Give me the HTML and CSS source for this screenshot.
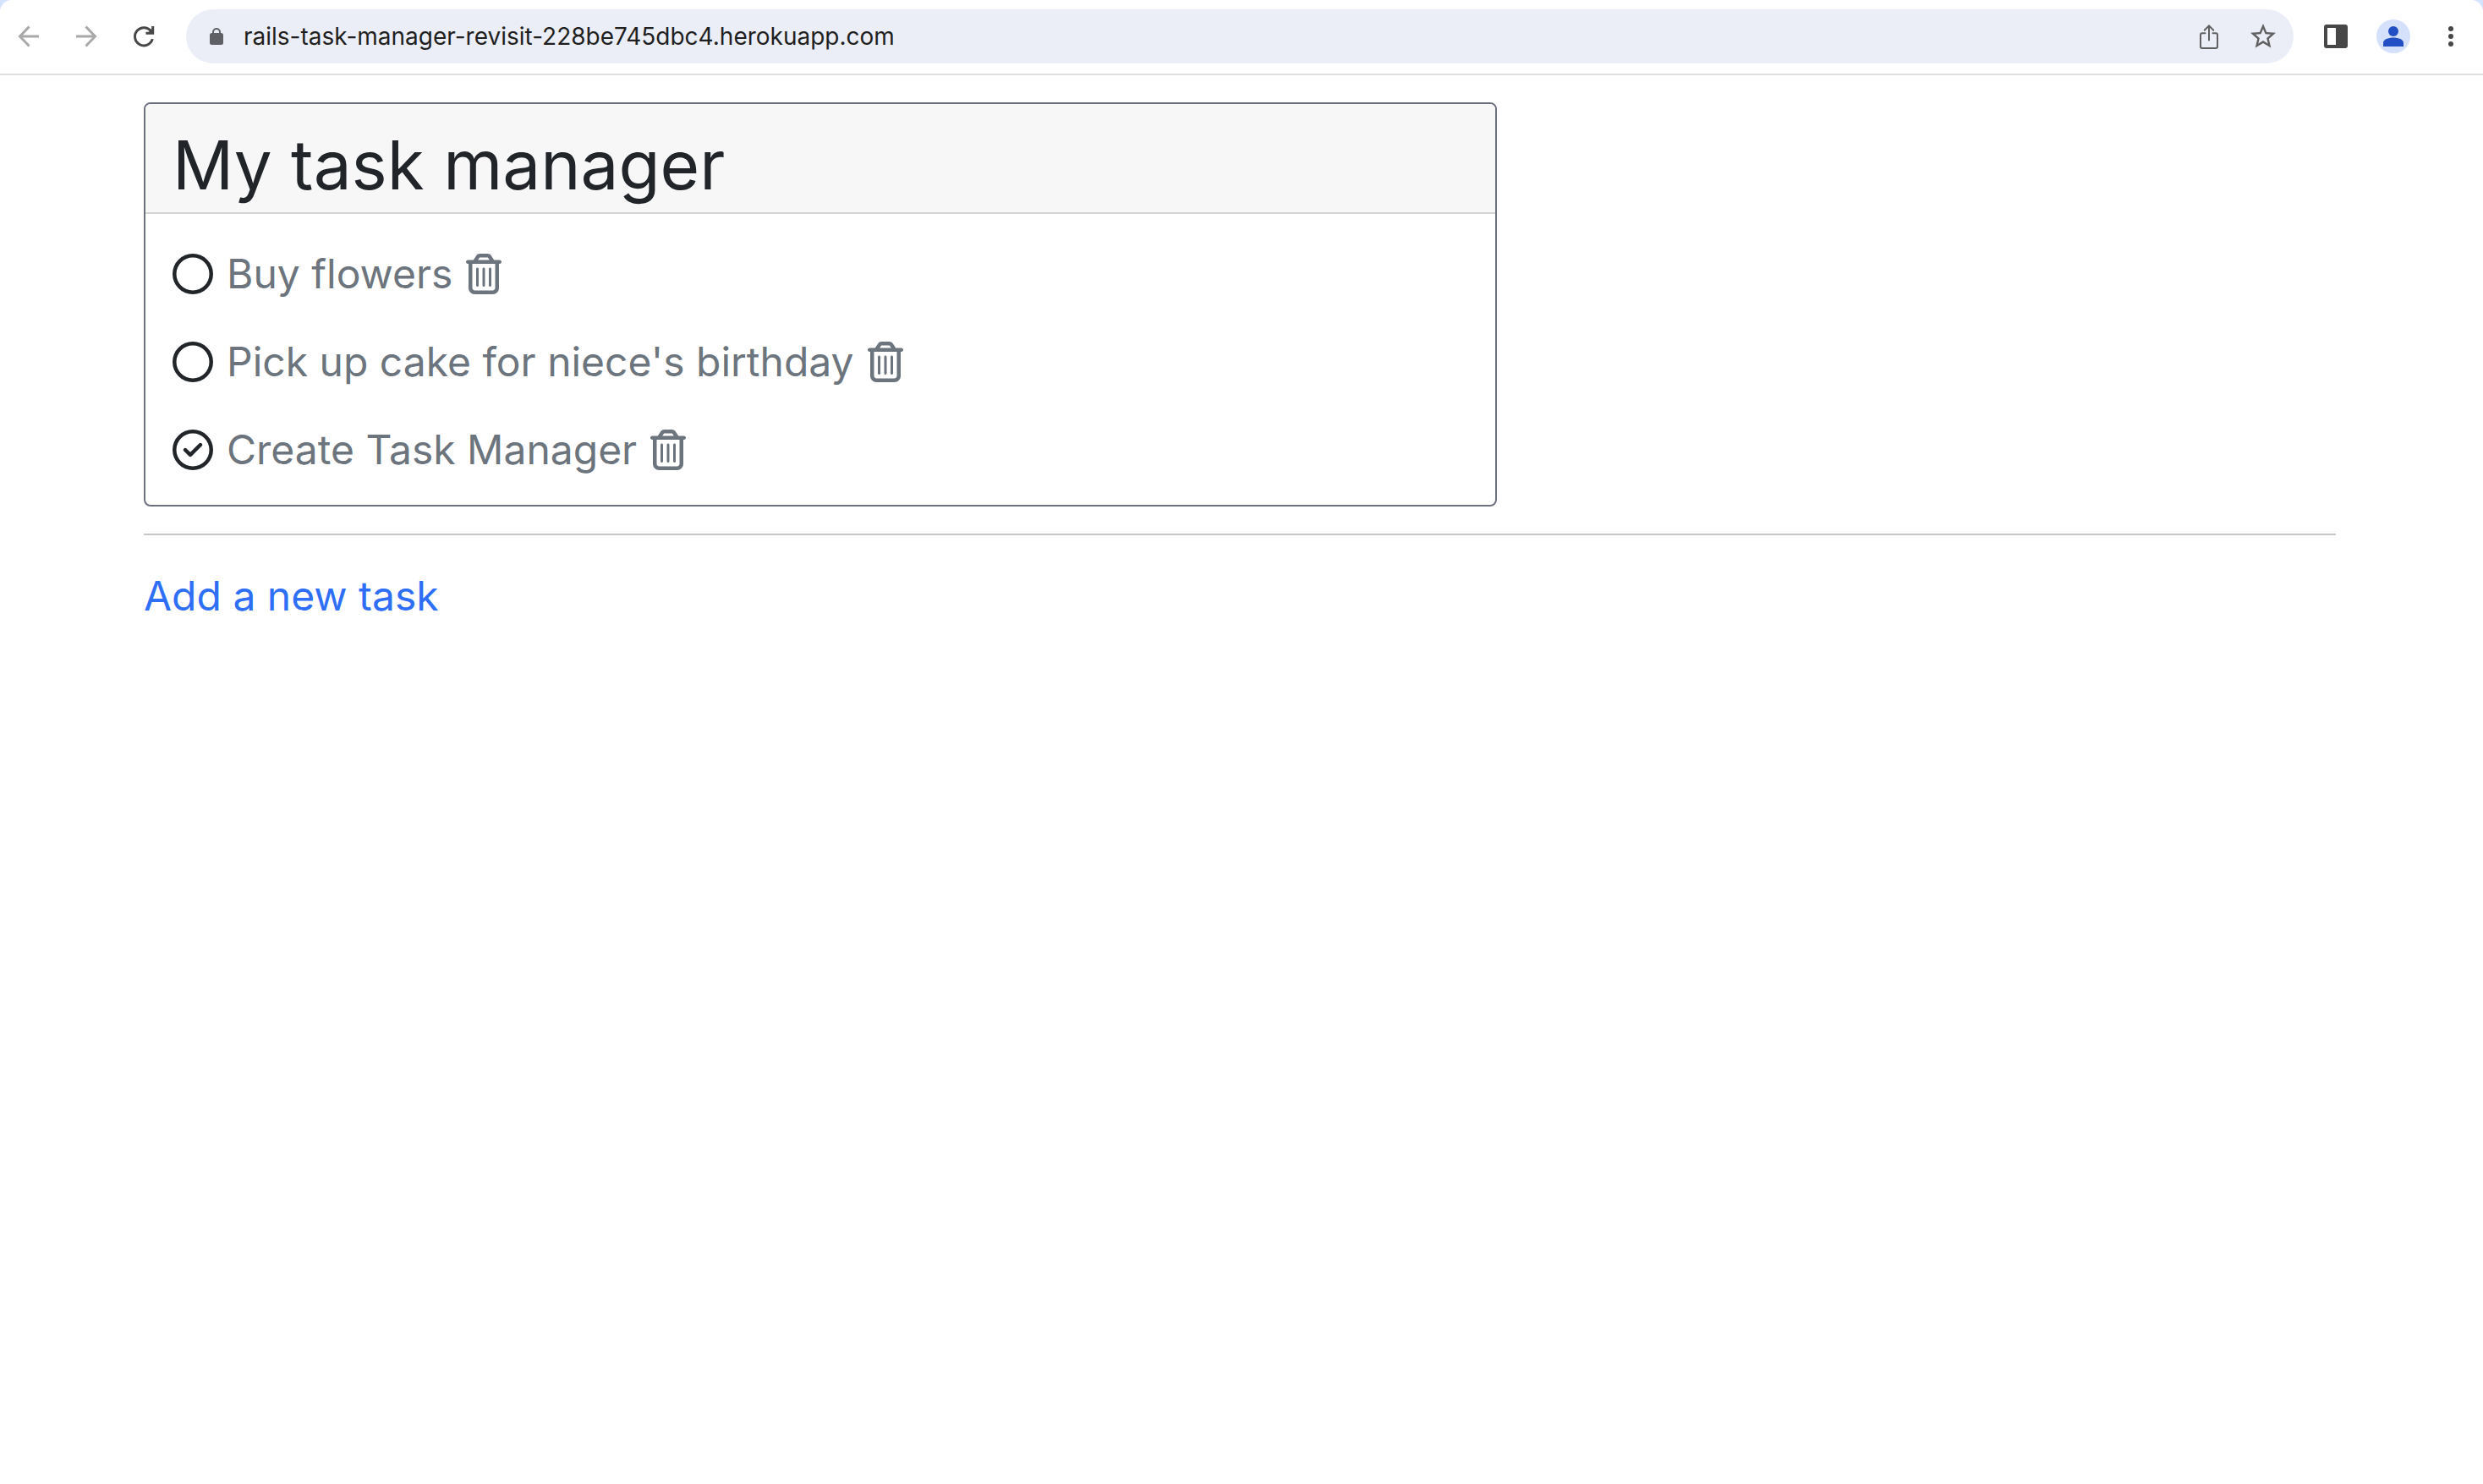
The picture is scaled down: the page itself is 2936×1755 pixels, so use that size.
FILE: index.html
```html
<!DOCTYPE html>
<html lang="en">
<head>
  <meta charset="utf-8">
  <title>My task manager</title>
  <link rel="stylesheet" href="styles.css">
</head>
<body>
  <svg class="sprite" aria-hidden="true">
    <symbol id="circle" viewBox="0 0 512 512"><path d="M464 256A208 208 0 1 0 48 256a208 208 0 1 0 416 0zM0 256a256 256 0 1 1 512 0A256 256 0 1 1 0 256z"/></symbol>
    <symbol id="circle-check" viewBox="0 0 512 512"><path d="M256 48a208 208 0 1 1 0 416 208 208 0 1 1 0-416zm0 464A256 256 0 1 0 256 0a256 256 0 1 0 0 512zM369 209c9.4-9.4 9.4-24.6 0-33.9s-24.6-9.4-33.9 0l-111 111-47-47c-9.4-9.4-24.6-9.4-33.9 0s-9.4 24.6 0 33.9l64 64c9.4 9.4 24.6 9.4 33.9 0L369 209z"/></symbol>
    <symbol id="trash" viewBox="0 0 448 512"><path d="M170.5 51.6L151.5 80h145l-19-28.4c-1.5-2.2-4-3.6-6.7-3.6H177.1c-2.7 0-5.2 1.3-6.7 3.6zm147-26.6L354.2 80H368h48 8c13.3 0 24 10.7 24 24s-10.7 24-24 24h-8V432c0 44.2-35.8 80-80 80H112c-44.2 0-80-35.8-80-80V128H24c-13.3 0-24-10.7-24-24S10.7 80 24 80h8H80 93.8l36.7-55.1C140.9 9.4 158.4 0 177.1 0h93.7c18.7 0 36.2 9.4 46.6 24.9zM80 128V432c0 17.7 14.3 32 32 32H336c17.7 0 32-14.3 32-32V128H80zm80 64V400c0 8.8-7.2 16-16 16s-16-7.2-16-16V192c0-8.8 7.2-16 16-16s16 7.2 16 16zm80 0V400c0 8.8-7.2 16-16 16s-16-7.2-16-16V192c0-8.8 7.2-16 16-16s16 7.2 16 16zm80 0V400c0 8.8-7.2 16-16 16s-16-7.2-16-16V192c0-8.8 7.2-16 16-16s16 7.2 16 16z"/></symbol>
  </svg>

  <div class="frame">
    <header class="toolbar">
      <nav class="tools" aria-label="Navigation">
        <button class="tool" type="button" aria-label="Back" disabled>
          <svg class="glyph faded" viewBox="0 0 48 48"><path d="M36 24H13.500M24.500 12.500 13.500 24l11 11.500"/></svg>
        </button>
        <button class="tool" type="button" aria-label="Forward" disabled>
          <svg class="glyph faded" viewBox="0 0 48 48"><path d="M12 24h22.500M23.500 12.500 34.500 24l-11 11.500"/></svg>
        </button>
        <button class="tool" type="button" aria-label="Reload">
          <svg class="glyph reload" viewBox="0 0 48 48"><path d="M34.300 27.200A10.600 10.600 0 1 1 33 18.500M34.700 12v8.300H26.500"/><path class="solid" d="M33.200 14.500v5.500h-5.200l3-2z"/></svg>
        </button>
      </nav>
      <div class="address">
        <svg class="lock" viewBox="0 0 16 22"><path d="M4 9V6a4 4 0 0 1 8 0v3" fill="none" stroke="#5f6066" stroke-width="2"/><rect y="7" width="16" height="14" rx="2.500" fill="#5f6066"/></svg>
        <input class="url" type="text" aria-label="Address" value="rails-task-manager-revisit-228be745dbc4.herokuapp.com">
        <button class="tool" type="button" aria-label="Share">
          <svg class="glyph share" viewBox="0 0 48 48"><path d="M19.500 20.200H16a2 2 0 0 0-2 2V36a2 2 0 0 0 2 2h16a2 2 0 0 0 2-2V22.200a2 2 0 0 0-2-2h-3.500M24 28.500V12M18.700 16.700 24 11.400l5.300 5.300"/></svg>
        </button>
        <button class="tool" type="button" aria-label="Bookmark this page">
          <svg class="star" viewBox="0 0 24 24"><path d="M22 9.240l-7.190-.620L12 2 9.190 8.630 2 9.240l5.460 4.730L5.820 21 12 17.270 18.180 21l-1.630-7.030L22 9.240zM12 15.400l-3.760 2.270 1-4.280-3.320-2.880 4.380-.380L12 6.100l1.710 4.040 4.380.380-3.320 2.880 1 4.280L12 15.400z"/></svg>
        </button>
      </div>
      <div class="tools">
        <button class="tool" type="button" aria-label="Side panel">
          <svg class="glyph" viewBox="0 0 48 48"><rect x="10" y="10" width="28" height="28" rx="3" fill="#474747"/><path d="M14 14h10v20H14z" fill="#fff"/></svg>
        </button>
        <button class="tool" type="button" aria-label="Profile">
          <svg class="glyph" viewBox="0 0 48 48"><circle cx="24" cy="24" r="20" fill="#d5e1fb"/><circle cx="24" cy="18" r="6" fill="#224fc4"/><path d="M12 36v-4.500C12 27 20 25.500 24 25.500S36 27 36 31.500V36z" fill="#224fc4"/></svg>
        </button>
        <button class="tool" type="button" aria-label="Menu">
          <svg class="glyph" viewBox="0 0 48 48" fill="#474747"><circle cx="24" cy="15" r="3"/><circle cx="24" cy="24" r="3"/><circle cx="24" cy="33" r="3"/></svg>
        </button>
      </div>
    </header>

    <main class="page">
      <section class="card">
        <h1 class="card-title">My task manager</h1>
        <ul class="tasks">
          <li class="task">
            <svg class="state" role="img" aria-label="To do"><use href="#circle"/></svg>
            <a class="task-link" href="#buy-flowers">Buy flowers</a>
            <a class="delete" href="#delete-1" aria-label="Delete"><svg class="trash"><use href="#trash"/></svg></a>
          </li>
          <li class="task">
            <svg class="state" role="img" aria-label="To do"><use href="#circle"/></svg>
            <a class="task-link" href="#birthday-cake">Pick up cake for niece's birthday</a>
            <a class="delete" href="#delete-2" aria-label="Delete"><svg class="trash"><use href="#trash"/></svg></a>
          </li>
          <li class="task">
            <svg class="state" role="img" aria-label="Done"><use href="#circle-check"/></svg>
            <a class="task-link" href="#task-manager">Create Task Manager</a>
            <a class="delete" href="#delete-3" aria-label="Delete"><svg class="trash"><use href="#trash"/></svg></a>
          </li>
        </ul>
      </section>
      <hr class="divider">
      <a class="new-task" href="#new">Add a new task</a>
    </main>
  </div>
</body>
</html>
```
FILE: styles.css
```css
* {
  box-sizing: border-box;
}

body {
  margin: 0;
  background: #d5e2fb;
  color: #212529;
  font-family: "Inter", sans-serif;
  font-size: 48px;
  line-height: 72px;
}

.sprite {
  display: none;
}

.frame {
  min-height: 100vh;
  background: #fff;
  border-radius: 14px 14px 0 0;
}

/* Browser toolbar */

.toolbar {
  display: flex;
  align-items: center;
  gap: 26px;
  padding: 11px 14px 12px 10px;
  border-bottom: 2px solid #e0e0e0;
}

.tools {
  display: flex;
  gap: 20px;
}

.tool {
  display: flex;
  align-items: center;
  justify-content: center;
  width: 48px;
  height: 48px;
  padding: 0;
  border: 0;
  background: none;
}

.glyph {
  width: 48px;
  height: 48px;
}

.faded,
.reload,
.share {
  fill: none;
  stroke-width: 3;
}

.faded {
  stroke: #a9a9a9;
}

.reload {
  stroke: #474747;
}

.solid {
  fill: #474747;
  stroke: none;
}

.share {
  stroke: #606060;
  stroke-width: 2;
  stroke-linecap: round;
}

.star {
  width: 36px;
  height: 36px;
  fill: #606060;
}

.address {
  display: flex;
  flex: 1;
  align-items: center;
  gap: 16px;
  height: 64px;
  padding: 0 12px 0 28px;
  border-radius: 32px;
  background: #ebeef7;
}

.lock {
  width: 16px;
  height: 22px;
}

.url {
  flex: 1;
  min-width: 0;
  height: 48px;
  padding: 0 8px;
  border: 0;
  outline: 0;
  background: none;
  color: #1f1f1f;
  font-family: inherit;
  font-size: 28px;
}

/* Page */

.page {
  padding: 32px 174px 32px 170px;
}

.card {
  max-width: 1600px;
  border: 2px solid #6c717d;
  border-radius: 8px;
  overflow: hidden;
}

.card-title {
  margin: 0;
  padding: 24px 32px 8px;
  border-bottom: 2px solid #d5d5d5;
  background: #f7f7f7;
  font-size: 80px;
  font-weight: 400;
  line-height: 96px;
}

.tasks {
  display: grid;
  gap: 32px;
  margin: 0;
  padding: 35px 32px 29px;
  list-style: none;
}

.task {
  display: flex;
  align-items: center;
  gap: 16px;
}

.state {
  width: 48px;
  height: 48px;
  fill: currentColor;
}

.task-link,
.delete {
  color: #6c757d;
  text-decoration: none;
}

.delete {
  display: flex;
}

.trash {
  width: 42px;
  height: 48px;
  fill: currentColor;
}

.divider {
  margin: 32px 0 36px;
  border: 0;
  border-top: 2px solid #c7c8c9;
}

.new-task {
  color: #2f6ff7;
  text-decoration: none;
}
```
